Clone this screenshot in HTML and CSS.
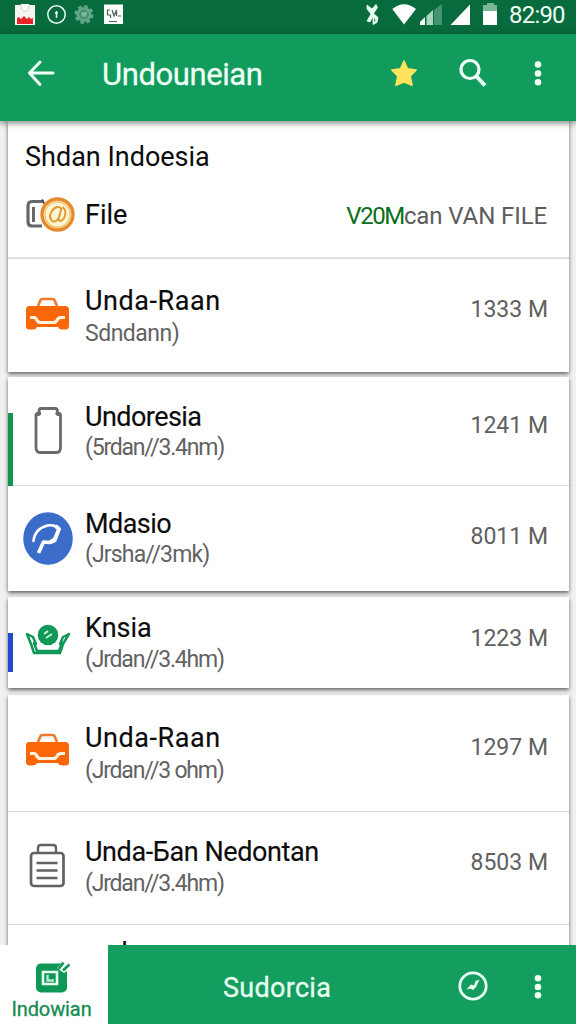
FILE: index.html
```html
<!DOCTYPE html>
<html lang="id">
<head>
<meta charset="utf-8">
<title>Undouneian</title>
<link rel="stylesheet" href="styles.css">
</head>
<body>
<div class="screen">
  <header class="status">
    <svg class="status-left" width="130" height="34" viewBox="0 0 130 34">
      <path d="M15 5H35V25H15Z" fill="#f5f5f2"/>
      <path d="M21 4c0 10 8 10 8 0" fill="#fff" stroke="#c9cfcb"/>
      <path d="M17 24V18l2-1 2 2 3-3 3 3 2-2 2 2 2-1v6Z" fill="#e5242b"/>
      <circle cx="56.500" cy="14.500" r="8.700" fill="none" stroke="#eafff4" stroke-width="1.500"/>
      <path d="M56.500 11v7M55 13h3" stroke="#eafff4" stroke-width="1.500"/>
      <circle cx="84" cy="14.500" r="7.600" fill="#64a586"/>
      <circle cx="84" cy="14.500" r="8" fill="none" stroke="#64a586" stroke-width="3" stroke-dasharray="3.600 2.680"/>
      <circle cx="84" cy="14.500" r="4" fill="none" stroke="#3c8e66" stroke-width="1.500"/>
      <path d="M82 13l2 2 3-3" fill="none" stroke="#8fc0a7" stroke-width="1.300"/>
      <path d="M104 4.500H123V24H104Z" fill="#fbfffc"/>
      <path d="M110 10h-2.500v5h3v3M112 10l2 6 2.500-6v6M118 16h3M109 21.500h8" fill="none" stroke="#4d5f57" stroke-width="1.200"/>
    </svg>
    <div class="status-right">
      <svg width="157" height="34" viewBox="0 0 157 34">
        <g transform="translate(6 0)">
          <path d="M7 5l5 4 4-4.500 1.500 3-4 6 4.500 4-1 5-4 2V16l-3 6-3-1 4-7-4-5Z" fill="#e9fff3" stroke="#e9fff3" stroke-width=".8"/>
          <path d="M14.300 17.500l1.200 3-1.200 1.500Z" fill="#07683d"/>
        </g>
        <g transform="translate(15 0)">
          <path d="M35 24.500L23.300 9Q35-.500 47 9Z" fill="#fff"/>
          <path d="M51 25V22L56 17v8Z" fill="#fff"/>
          <path d="M57.500 25V16L64 10v15Z" fill="#a8d8bf"/>
          <path d="M65 25V10l8-6v21Z" fill="#469370"/>
          <path d="M81.500 25L101 4.500V25Z" fill="#fff"/>
          <path d="M114 11V5h4V3h7v2h3v6Z" fill="#79b797"/>
          <path d="M114 11h14v14h-14Z" fill="#fff"/>
        </g>
      </svg>
      <span class="clock">82:90</span>
    </div>
  </header>

  <nav class="appbar">
    <svg class="back" width="28" height="28" viewBox="0 0 28 28"><path d="M26 14H3M13 3L2.500 14 13 25.500" fill="none" stroke="#f0fff7" stroke-width="3" stroke-linecap="round" stroke-linejoin="round"/></svg>
    <h1 class="title">Undouneian</h1>
    <svg class="star" width="28" height="28" viewBox="0 0 28 28"><path d="M14 2l3.500 7.700 8.700 1.200-6 6 1.900 9.300L14 23l-8.100 3.200 1.900-9.300-6-6 8.700-1.200Z" fill="#fee45c" stroke="#fee45c" stroke-width="1.500" stroke-linejoin="round"/></svg>
    <svg class="search" width="28" height="30" viewBox="0 0 28 30"><circle cx="11" cy="11.500" r="9" fill="none" stroke="#f0fff7" stroke-width="3.200"/><path d="M17.500 18.500L26 27.500" stroke="#f0fff7" stroke-width="4"/></svg>
    <svg class="more" width="8" height="26" viewBox="0 0 8 26"><g fill="#f0fff7"><circle cx="4" cy="4.500" r="3.300"/><circle cx="4" cy="13.500" r="3.300"/><circle cx="4" cy="22.200" r="3.300"/></g></svg>
  </nav>

  <main class="list">
    <section class="card">
      <div class="head">
        <h2 class="section-title">Shdan Indoesia</h2>
        <div class="file">
          <svg width="50" height="38" viewBox="0 0 50 38">
            <path d="M17 5.500H7Q3 5.500 3 10v16q0 4 4 4H17" fill="none" stroke="#66676a" stroke-width="3.200"/>
            <path d="M8.500 11v15" stroke="#66676a" stroke-width="3"/>
            <path d="M17 3.500l2 4" stroke="#44464a" stroke-width="2"/>
            <circle cx="32.500" cy="18.500" r="15.500" fill="#fff6d8" stroke="#e58a2e" stroke-width="3.400"/>
            <circle cx="32.500" cy="18.500" r="12.600" fill="none" stroke="#f4c66d" stroke-width="1.500"/>
            <path d="M36 12q-5-3-9 3t0 10q5 2 7.500-5l2-8-2.500 9q-1 4 1.500 4 4-1 5-8 0-4-3-6" fill="none" stroke="#e79a31" stroke-width="2"/>
          </svg>
          <span class="file-name">File</span>
          <span class="file-meta"><span class="accent">V20M</span>can VAN FILE</span>
        </div>
      </div>
      <div class="row h114">
        <svg class="icon car" width="50" height="52" viewBox="0 0 50 52">
          <path d="M15 18l2.500-6q.500-1 2-1h10q1.500 0 2 1l2.500 6" fill="none" stroke="#f3772a" stroke-width="2.600"/>
          <path d="M6 18H42q4 0 4 4v16q0 3.500-3.500 3.500H39q-3 0-4-2.500H14q-1 2.500-4 2.500H6.500Q3 41.500 3 38V22q0-4 3-4Z" fill="#fb6608"/>
          <path d="M7 29.500h4q2 0 3 3l2 2h16l2-2q1-3 4-3h4" fill="none" stroke="#fff3df" stroke-width="3.200"/>
        </svg>
        <div class="text t33"><h3 class="wide">Unda-Raan</h3><p class="soft">Sdndann)</p></div>
        <span class="size">1333 M</span>
      </div>
    </section>

    <section class="card">
      <div class="row h109 divided marked green">
        <svg class="icon" width="50" height="52" viewBox="0 0 50 52"><g transform="translate(1.500 -1)" fill="none" stroke="#6b6b6b"><path d="M16.500 4.500h14q2.500 0 2.500 3v3h3v33q0 5-4 5H15.500q-4 0-4-5V10.500h3v-3q0-3 2-3Z" stroke-width="2.800" stroke-linejoin="round"/><path d="M11.500 9.500h5M31 9.500h5" stroke-width="3"/></g></svg>
        <div class="text t31"><h3 class="tight">Undoresia</h3><p class="tightest">(5rdan//3.4nm)</p></div>
        <span class="size">1241 M</span>
      </div>
      <div class="row h105">
        <svg class="icon" width="50" height="54" viewBox="0 0 50 54">
          <ellipse cx="25" cy="26.500" rx="24.800" ry="26.300" fill="#3c6cca"/>
          <path d="M10.500 29q1-12 14-15.500 6-1 9.500 1.500" fill="none" stroke="#fff" stroke-width="2.500" stroke-linecap="round"/>
          <path d="M32.500 14l3.500 3-4.500 11.500-4.500 2" fill="none" stroke="#fff" stroke-width="4" stroke-linejoin="round"/>
          <path d="M15.500 41l5-11 6 .500 6-4" fill="none" stroke="#fff" stroke-width="3.600" stroke-linejoin="round"/>
        </svg>
        <div class="text t31"><h3 class="tight">Mdasio</h3><p class="tighter">(Jrsha//3mk)</p></div>
        <span class="size low">8011 M</span>
      </div>
    </section>

    <section class="card">
      <div class="row h91 marked blue">
        <svg class="icon crown" width="50" height="40" viewBox="0 0 50 40">
          <path d="M4 14l6 3 3 7-2-1 3 8h22l3-8-2 1 3-7 6-3-6 10-3 9H11L8 24Z" fill="#fff" stroke="#119858" stroke-width="2.500" stroke-linejoin="round"/>
          <circle cx="25" cy="15.500" r="11.500" fill="#fff"/>
          <circle cx="25" cy="15" r="10.300" fill="#119858"/>
          <path d="M21 14l4-3M23 18l6-4" stroke="#c7f2da" stroke-width="2"/>
        </svg>
        <div class="text t32"><h3>Knsia</h3><p class="tightest">(Jrdan//3.4hm)</p></div>
        <span class="size mid">1223 M</span>
      </div>
    </section>

    <section class="card">
      <div class="row h116 divided">
        <svg class="icon raised" width="50" height="52" viewBox="0 0 50 52">
          <path d="M15 18l2.500-6q.500-1 2-1h10q1.500 0 2 1l2.500 6" fill="none" stroke="#f3772a" stroke-width="2.600"/>
          <path d="M6 18H42q4 0 4 4v16q0 3.500-3.500 3.500H39q-3 0-4-2.500H14q-1 2.500-4 2.500H6.500Q3 41.500 3 38V22q0-4 3-4Z" fill="#fb6608"/>
          <path d="M7 29.500h4q2 0 3 3l2 2h16l2-2q1-3 4-3h4" fill="none" stroke="#fff3df" stroke-width="3.200"/>
        </svg>
        <div class="text t33 up"><h3 class="wide">Unda-Raan</h3><p class="tightest">(Jrdan//3 ohm)</p></div>
        <span class="size">1297 M</span>
      </div>
      <div class="row h113 divided">
        <svg class="icon raised" width="50" height="52" viewBox="0 0 50 52"><g fill="none" stroke="#626262" stroke-width="2.700"><rect x="8" y="14" width="32.500" height="33" rx="3"/><path d="M15 14V9q0-3 3-3h12q3 0 3 3v5" stroke-width="2.400"/><path d="M13.500 24h21M13.500 31.500h21M13.500 39h21" stroke-width="2.400"/></g></svg>
        <div class="text t32 up2"><h3 class="long">Unda-Бan Nedontan</h3><p class="tightest">(Jrdan//3.4hm)</p></div>
        <span class="size">8503 M</span>
      </div>
      <div class="row peek"><h3>anda</h3></div>
    </section>
  </main>

  <footer class="bottom">
    <div class="tab">
      <svg width="36" height="33" viewBox="0 0 36 33">
        <rect x="2" y="3.500" width="31" height="29" rx="5" fill="#0d9955"/>
        <path d="M23 8L31 0h5v9l-6 4Z" fill="#fff"/>
        <path d="M24.500 9l5-6.500M29 10.500l6.500-6" stroke="#0d9955" stroke-width="2.600"/>
        <path d="M9 12h14v12H9Z" fill="none" stroke="#e9fff2" stroke-width="2.600"/>
        <path d="M13.500 15v5.500H20" fill="none" stroke="#b9ebd0" stroke-width="2.400"/>
      </svg>
      <span>Indowian</span>
    </div>
    <span class="bottom-title">Sudorcia</span>
    <svg class="compass" width="32" height="32" viewBox="0 0 32 32"><circle cx="16" cy="16" r="13.200" fill="none" stroke="#ecfff5" stroke-width="2.800"/><path d="M9.500 19.500l4.500-5 3 1 1.500-4.500 4-1.500-3.500 7.500-3 3-2.500-1.500Z" fill="#ecfff5"/></svg>
    <svg class="more" width="8" height="26" viewBox="0 0 8 26"><g fill="#ecfff5"><circle cx="4" cy="4.300" r="3.300"/><circle cx="4" cy="13" r="3.300"/><circle cx="4" cy="21.300" r="3.300"/></g></svg>
  </footer>
</div>
</body>
</html>
```

FILE: styles.css
```css
* { box-sizing: border-box; }
body { margin: 0; font-family: Roboto, "Noto Sans", sans-serif; }
h1, h2, h3, p { margin: 0; font-weight: 400; white-space: nowrap; }
svg { display: block; flex: none; }

.screen { width: 576px; height: 1024px; display: flex; flex-direction: column; overflow: hidden; background: #f1f1f2; }

.status { flex: none; height: 34px; display: flex; justify-content: space-between; background: #076b3e; }
.status-right { display: flex; padding-right: 10px; }
.clock { width: 57px; margin-left: -2px; font-size: 24px; line-height: 30px; letter-spacing: -0.8px; color: #effff6; }

.appbar { flex: none; height: 87px; display: flex; align-items: center; padding: 0 34px 9px 27px; background: #119b5c; box-shadow: 0 2px 6px rgba(0, 0, 0, 0.5); z-index: 1; }
.title { width: 288px; margin-left: 47px; padding-top: 4px; font-size: 31px; line-height: 36px; letter-spacing: -0.4px; color: #effff6; -webkit-text-stroke: 0.3px #effff6; }
.search { margin-left: 41px; }
.appbar .more { margin-left: auto; }

.list { flex: 1; min-height: 0; display: flex; flex-direction: column; padding: 0 7px 0 8px; overflow: hidden; }
.card { flex: none; background: #fff; margin-bottom: 6px; box-shadow: 0 2px 4px rgba(0, 0, 0, 0.6); }
.card:nth-child(1) { margin-bottom: 5px; }
.card:nth-child(3) { margin-bottom: 7px; }

.head { height: 138px; padding: 20px 22px 0 17px; border-bottom: 2px solid #dfdfdf; }
.section-title { font-size: 27px; line-height: 32px; color: #0c0c0c; }
.file { display: flex; align-items: center; height: 38px; margin-top: 23px; }
.file-name { margin-left: 10px; font-size: 27px; color: #0c0c0c; -webkit-text-stroke: 0.15px #0c0c0c; }
.file-meta { margin-left: auto; padding-top: 1px; font-size: 24px; letter-spacing: -0.1px; color: #5c5c5c; white-space: nowrap; }
.accent { color: #087018; letter-spacing: -1.4px; }

.row { display: flex; align-items: center; padding: 0 21px 0 15px; }
.h114 { height: 113px; }
.h109 { height: 109px; }
.h105 { height: 105px; }
.h91 { height: 91px; }
.h116 { height: 117px; }
.h113 { height: 113px; }
.divided { border-bottom: 1px solid #dadada; }
.marked { padding-left: 10px; }
.marked::before { content: ""; flex: none; width: 5px; margin-left: -10px; margin-right: 10px; }
.green::before { height: 73px; background: #119650; margin-top: 36px; }
.blue::before { height: 39px; background: #1f49cf; margin-top: 20px; }
.car { margin-top: -4px; }
.raised { margin-top: -6px; }
.crown { margin-top: -5px; }
.text { margin-left: 12px; flex: 1; }
.text.up { padding-bottom: 2px; }
.text.up2 { padding-bottom: 4px; }
h3 { font-size: 27px; line-height: 33px; color: #0c0c0c; -webkit-text-stroke: 0.15px #0c0c0c; }
h3.wide { letter-spacing: 0.55px; }
h3.tight { letter-spacing: -0.55px; }
h3.long { letter-spacing: -0.4px; }
.text p { font-size: 23px; line-height: 29px; color: #626262; }
.text p.soft { letter-spacing: -0.5px; }
.text p.tighter { letter-spacing: -0.85px; }
.text p.tightest { letter-spacing: -1.2px; }
.t33 h3 { line-height: 36px; }
.t31 h3 { line-height: 32px; }
.t32 h3 { line-height: 34px; }
.size { padding-bottom: 12px; font-size: 23px; color: #606060; white-space: nowrap; }
.size.low { padding-bottom: 4px; }
.size.mid { padding-bottom: 8px; }
.peek { height: 40px; align-items: flex-start; padding: 12px 0 0 75px; }

.bottom { flex: none; height: 79px; display: flex; align-items: center; padding-right: 34px; background: #139d5f; z-index: 1; }
.tab { width: 108px; height: 79px; padding: 15px 5px 0 0; display: flex; flex-direction: column; align-items: center; background: #fff; color: #158b50; font-size: 20px; line-height: 33px; }
.tab span { -webkit-text-stroke: 0.3px #158b50; letter-spacing: -0.1px; }
.bottom-title { margin: 6px 0 0 115px; font-size: 27px; letter-spacing: 0.3px; color: #e6fff1; -webkit-text-stroke: 0.3px #e6fff1; }
.compass { margin: 2px 0 0 auto; }
.bottom .more { margin: 4px 0 0 45px; }
```
